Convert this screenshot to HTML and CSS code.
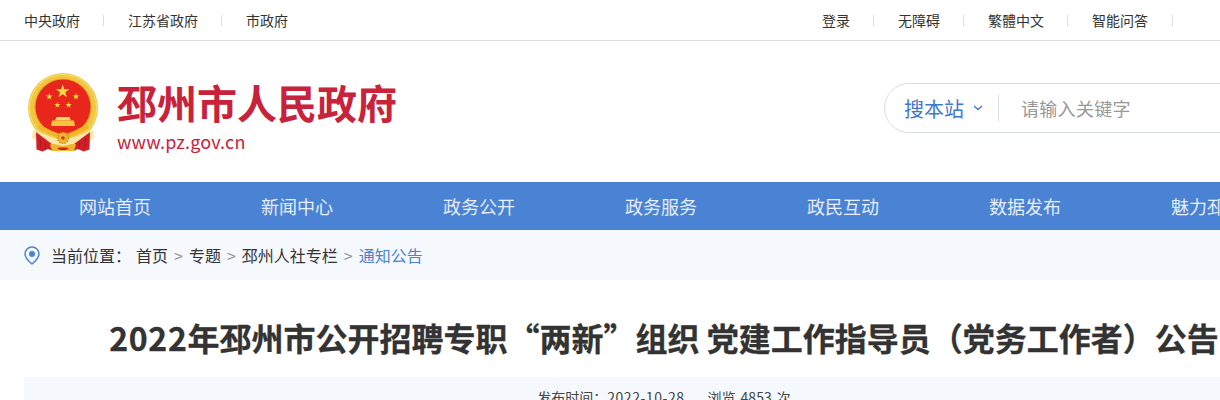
FILE: index.html
```html
<!DOCTYPE html>
<html lang="zh-CN">
<head>
<meta charset="utf-8">
<title>邳州市人民政府</title>
<link rel="stylesheet" href="styles.css">
</head>
<body>
<div class="topbar">
  <div class="wrap topbar-inner">
    <ul class="toplinks">
      <li>中央政府</li>
      <li>江苏省政府</li>
      <li>市政府</li>
    </ul>
    <ul class="toplinks toplinks-right">
      <li>登录</li>
      <li>无障碍</li>
      <li>繁體中文</li>
      <li>智能问答</li>
    </ul>
  </div>
</div>
<header class="wrap header">
  <div class="brand">
    <svg class="emblem" viewBox="0 0 90 85" width="90" height="85" aria-hidden="true">
      <defs>
        <polygon id="star" points="0,-1 .225,-.309 .951,-.309 .363,.118 .588,.809 0,.382 -.588,.809 -.363,.118 -.951,-.309 -.225,-.309" fill="#fcd93f"/>
      </defs>
      <circle cx="43" cy="38" r="35" fill="#f3c63f"/>
      <circle cx="43" cy="38" r="33.500" fill="none" stroke="#f9e07c" stroke-width="1"/>
      <circle cx="43" cy="37" r="28.500" fill="#e3a322"/>
      <circle cx="43" cy="37" r="27.500" fill="#e8261b"/>
      <use href="#star" transform="translate(42.7 21.5) scale(7.2)"/>
      <use href="#star" transform="translate(29.3 26.5) scale(3.6)"/>
      <use href="#star" transform="translate(56 26.5) scale(3.6)"/>
      <use href="#star" transform="translate(37.3 35) scale(3.3)"/>
      <use href="#star" transform="translate(48.7 35) scale(3.3)"/>
      <path d="M36.500 47h13l1.500 3.500H35z" fill="#f9d766"/>
      <path d="M32 50.500h22l1 5.500H31z" fill="#f5c63c"/>
      <path d="M13 60C22 62 32 69 43 69S64 62 73 60L74 68 62 76H24L12 68z" fill="#fbe7a8"/>
      <path d="M16 62C17 63 27 70 33 75V81L28 79 22.500 81.500 16.500 79.500z" fill="#d11f27"/>
      <path d="M70 62C69 63 59 70 53 75V81L58 79 63.500 81.500 69.500 79.500z" fill="#d11f27"/>
      <path d="M20 68.500l1 10M25 72l1 7M60 72l-1 7M65.500 68.500l-1 10" stroke="#a81420" stroke-width=".7" fill="none"/>
      <path d="M18 56.500C24 58 33 66 43 66S62 58 68 56.500" fill="none" stroke="#f0b62a" stroke-width="4"/>
      <circle cx="43" cy="68" r="5.500" fill="#eeb52e" stroke="#d8941c" stroke-width="1.500" stroke-dasharray="1.500 1.200"/>
      <circle cx="43" cy="68" r="1.800" fill="#d13a20"/>
      <path d="M30 74.500C35 73 39 76 43 76S51 73 56 74.500L54 81H32z" fill="#f0b62a"/>
      <path d="M37 78.500c2-1.500 4-1 6-1s4-.5 6 1c-2 1.500-4 1.500-6 1.500s-4 0-6-1.500z" fill="#d11f27"/>
    </svg>
    <div class="brand-text">
      <div class="brand-name">邳州市人民政府</div>
      <div class="brand-url">www.pz.gov.cn</div>
    </div>
  </div>
  <div class="search">
    <span class="search-scope">搜本站</span>
    <svg class="chevron" viewBox="0 0 10 6" width="10" height="6" aria-hidden="true"><path d="M1 1l4 3.600L9 1" fill="none" stroke="#3f78cc" stroke-width="1.300"/></svg>
    <span class="search-sep"></span>
    <span class="search-input">请输入关键字</span>
  </div>
</header>
<nav class="nav">
  <ul class="wrap nav-list">
    <li>网站首页</li>
    <li>新闻中心</li>
    <li>政务公开</li>
    <li>政务服务</li>
    <li>政民互动</li>
    <li>数据发布</li>
    <li>魅力邳州</li>
  </ul>
</nav>
<div class="crumbs">
  <div class="wrap crumbs-inner">
    <svg class="pin" viewBox="0 0 16 19" width="16" height="19" aria-hidden="true">
      <path d="M8 1a7 7 0 0 1 7 7c0 4-4 7.500-7 10C5 15.500 1 12 1 8a7 7 0 0 1 7-7z" fill="none" stroke="#4a82d4" stroke-width="1.500"/>
      <circle cx="8" cy="8" r="3" fill="#4a82d4"/>
    </svg>
    <span class="crumb-label">当前位置：</span>
    <span>首页</span><span class="crumb-sep">&gt;</span>
    <span>专题</span><span class="crumb-sep">&gt;</span>
    <span>邳州人社专栏</span><span class="crumb-sep">&gt;</span>
    <span class="crumb-current">通知公告</span>
  </div>
</div>
<main class="wrap article">
  <h1 class="article-title"><span class="title-year">2022</span>年邳州市公开招聘专职“两新”组织 党建工作指导员（党务工作者）公告</h1>
  <div class="article-meta">
    <span>发布时间：<span class="meta-date">2022-10-28</span></span>
    <span class="meta-views">浏览 4853 次</span>
  </div>
</main>
</body>
</html>
```
FILE: styles.css
```css
* { box-sizing: border-box; }
html, body { margin: 0; padding: 0; overflow: hidden; height: 400px; }
body {
  width: 1220px;
  background: #fff;
  color: #333;
  font-family: "Noto Sans CJK SC", "Noto Sans", sans-serif;
}
ul { list-style: none; margin: 0; padding: 0; }
.wrap { width: 1280px; margin-left: 24px; }

.topbar { width: 1340px; height: 41px; border-bottom: 1px solid #dcdcdc; }
.topbar-inner { display: flex; justify-content: space-between; padding-right: 131px; height: 40px; }
.toplinks { display: flex; align-items: center; font-size: 14px; line-height: 40px; }
.toplinks li { position: relative; padding-right: 48px; white-space: nowrap; }
.toplinks li::after {
  content: "";
  position: absolute;
  right: 24px;
  top: 15px;
  width: 1px;
  height: 11px;
  background: #ddd;
}
.toplinks li:last-child { padding-right: 0; }
.toplinks li:last-child::after { display: none; }
.toplinks-right li:last-child { padding-right: 25px; }
.toplinks-right li:last-child::after { display: block; right: 0; }

.header { display: flex; justify-content: space-between; height: 141px; }
.brand { display: flex; margin-left: -4px; padding-top: 29px; }
.emblem { display: block; flex: none; }
.brand-text { margin-left: 7px; margin-top: 7px; }
.brand-name { font-size: 40px; font-weight: 700; line-height: 50px; color: #c9223b; white-space: nowrap; }
.brand-url { font-size: 18px; letter-spacing: .16px; line-height: 24px; color: #c9223b; margin-top: 2px; }
.search {
  display: flex;
  align-items: center;
  width: 420px;
  height: 50px;
  margin-top: 42px;
  padding-left: 19px;
  border: 1px solid #d8dde3;
  border-radius: 25px 0 0 25px;
}
.search-scope { font-size: 20px; color: #3f78cc; white-space: nowrap; }
.chevron { margin-left: 9px; }
.search-sep { width: 1px; height: 26px; background: #d8dde3; margin-left: 15px; }
.search-input { font-size: 18px; letter-spacing: .3px; color: #999; margin-left: 22px; white-space: nowrap; }

.nav { width: 1340px; height: 48px; background: #4a82d4; }
.nav-list { display: grid; grid-template-columns: repeat(7, 182px); }
.nav-list li { text-align: center; font-size: 18px; line-height: 48px; color: #e6eefa; white-space: nowrap; }

.crumbs { height: 50px; background: #f5f8fc; }
.crumbs-inner { display: flex; align-items: center; height: 50px; font-size: 16px; color: #333; white-space: nowrap; }
.pin { flex: none; margin-right: 11px; }
.crumb-label { width: 85px; }
.crumb-sep { color: #999; margin: 0 6px; }
.crumb-current { color: #4a82d4; }

.article-title {
  margin: 0;
  padding: 33px 0 16px;
  font-size: 32px;
  line-height: 48px;
  font-weight: 700;
  text-align: center;
  white-space: nowrap;
  color: #333;
  -webkit-text-stroke: .3px #333;
}
.title-year { letter-spacing: .7px; }
.article-meta {
  display: flex;
  justify-content: center;
  gap: 23px;
  height: 60px;
  padding-top: 8px;
  background: #f5f9fd;
  font-size: 14px;
  line-height: 24px;
  color: #444;
}
.meta-date { letter-spacing: .55px; }
.meta-views { word-spacing: 1.5px; letter-spacing: .1px; }
```
